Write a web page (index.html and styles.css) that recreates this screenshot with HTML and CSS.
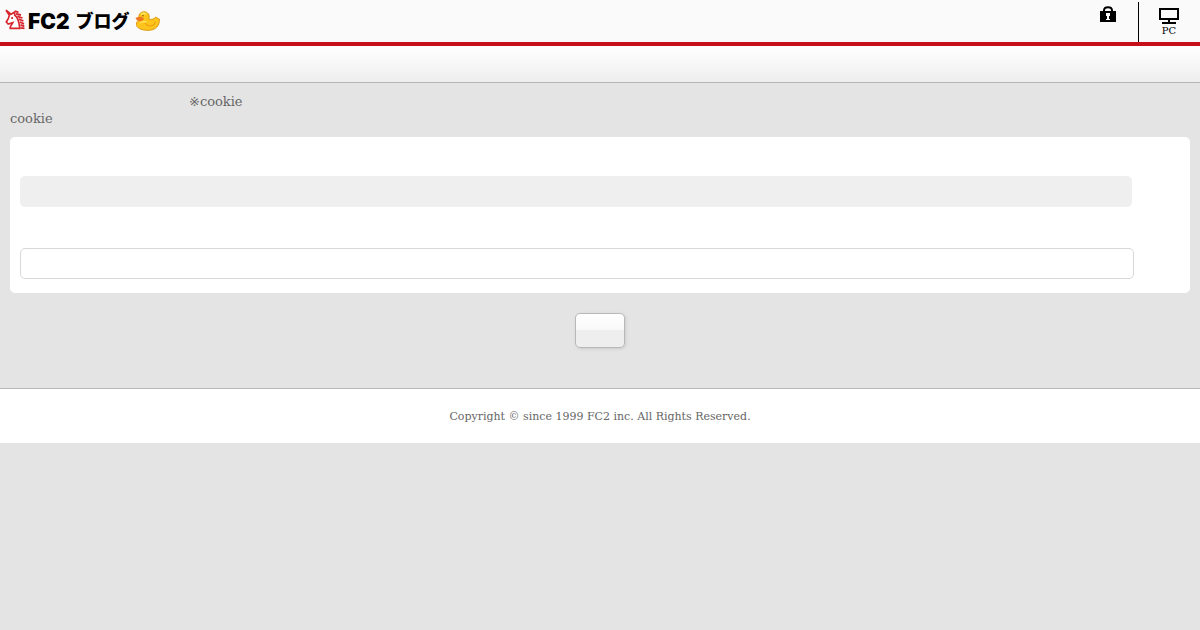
FILE: index.html
```
<!DOCTYPE html>
<html lang="ja">
<head>
<meta charset="utf-8">
<meta name="viewport" content="width=device-width, initial-scale=1">
<title>FC2 ブログ</title>
<link rel="stylesheet" href="styles.css">
</head>
<body>
<header class="header">
  <a class="logo" href="#">
    <svg class="logo-unicorn" viewBox="0 0 20 22" aria-hidden="true">
      <path class="horse" d="M1 1.2 6 5.2 9.5 3.2 9.8 6.3C12.5 8 14 12 14.8 19.3H5.2C4.8 17.8 6.3 16.3 7.8 13.6L3.2 15 1.3 13 3.4 9.5 4.4 6.2Z"/>
      <path class="mane" d="M9.8 2.2 13.5 3.4M11 4.8 16 6M12.4 7.4 17.5 9M13.8 10.2 18.4 12M14.8 13 19 14.8M15.5 15.8 19.3 17.4M15.5 18.8 19.5 19.4"/>
      <path class="mane" d="M6.2 9.2 8 9"/>
    </svg>
    <span class="logo-name">FC2</span>
    <span class="logo-blog">ブログ</span>
    <svg class="logo-duck" viewBox="0 0 25 20" aria-hidden="true">
      <path class="duck-body" d="M4.2 8.5C2.8 4 5.3.8 9 .8S15.3 4 13.8 8C16 9 18.8 8.2 20.6 6.2L24.4 8.2C24.8 14.8 20.5 19.3 13 19.3 6.2 19.3 1.4 17 1.4 13.2 1.4 11 2.7 9.8 4.2 8.5Z"/>
      <path class="duck-shine" d="M6 3.5Q8.5 1.4 11.4 3.2M5 12Q8 9.8 11.5 11"/>
      <path class="duck-wing" d="M10.2 12.2Q13 16.5 18 14.2 20 13 20.2 10.8"/>
      <path class="duck-beak" d="M.5 6.8Q3.5 5.8 6.2 5.8L9 7.4Q8 10.4 4.3 10.2 1.2 9.8.5 6.8Z"/>
      <circle class="duck-eye" cx="8" cy="4.8" r=".7"/>
    </svg>
  </a>
  <nav class="nav">
    <a class="nav-login" href="#" aria-label="ログイン">
      <svg class="icon-lock" viewBox="0 0 16 16" aria-hidden="true">
        <path class="shackle" d="M4 6V4.5C4 0 12 0 12 4.5V6"/>
        <path d="M0 5H16V16H0Z"/>
        <path class="keyhole" d="M6 7H10V10H9V13H10V14H6V13H7V10H6Z"/>
      </svg>
    </a>
    <a class="nav-pc" href="#">
      <svg class="icon-pc" viewBox="0 0 20 16" aria-hidden="true">
        <path d="M0 0H20V12H0ZM2 2V10H18V2ZM9 12H11V14H17V16H3V14H9Z" fill-rule="evenodd"/>
      </svg>
      <span>PC</span>
    </a>
  </nav>
</header>
<div class="title-bar"></div>
<form class="login">
  <p class="note">※cookie<br>cookie</p>
  <div class="card">
    <input class="field field-plain" type="password" aria-label="パスワード">
    <input class="field field-outlined" type="text" aria-label="認証">
  </div>
  <button class="submit" type="button" aria-label="送信"></button>
</form>
<footer class="footer">Copyright © since 1999 FC2 inc. All Rights Reserved.</footer>
</body>
</html>
```
FILE: styles.css
```
* {
  box-sizing: border-box;
}

body {
  margin: 0;
  background: #e4e4e4;
  color: #666;
  font-family: "DejaVu Serif", "DejaVu Sans", "Noto Sans CJK JP", serif;
  font-size: 13px;
  line-height: 17px;
}

.header {
  display: flex;
  justify-content: space-between;
  height: 46px;
  border-bottom: 4px solid #c7101a;
  background: #fafafa;
}

.logo {
  display: flex;
  align-items: center;
  padding: 0 0 2px 5px;
  color: #000;
  text-decoration: none;
}

.logo-unicorn {
  width: 20px;
  height: 22px;
  margin-right: 3px;
}

.horse {
  fill: #fff;
  stroke: #d7262e;
  stroke-width: 1.7;
}

.mane {
  fill: none;
  stroke: #d7262e;
  stroke-width: 1.8;
}

.logo-name {
  margin: 4px 6px 0 0;
  font: 900 21px/24px Inter, sans-serif;
}

.logo-blog {
  margin: 0 5px 0 0;
  font: 900 18px/24px "Noto Sans CJK JP", sans-serif;
}

.logo-duck {
  width: 25px;
  height: 20px;
  margin-top: 2px;
}

.duck-body {
  fill: #fdc51b;
  stroke: #dc9713;
  stroke-width: 1;
}

.duck-shine {
  fill: none;
  stroke: #ffe65c;
  stroke-width: 1.5;
}

.duck-wing {
  fill: none;
  stroke: #ee9d12;
  stroke-width: 1.2;
}

.duck-beak {
  fill: #ef7622;
}

.duck-eye {
  fill: #63420c;
}

.nav {
  display: flex;
  padding-top: 2px;
}

.nav-login,
.nav-pc {
  display: flex;
  flex-direction: column;
  align-items: center;
  color: #000;
  font-size: 10px;
  line-height: 14px;
  text-decoration: none;
}

.nav-login {
  width: 61px;
  padding-top: 4px;
}

.nav-pc {
  width: 62px;
  padding: 6px 1px 0 0;
  border-left: 1px solid #000;
}

.icon-lock {
  width: 16px;
  height: 16px;
}

.shackle {
  fill: none;
  stroke: #000;
  stroke-width: 2;
}

.keyhole {
  fill: #fff;
}

.icon-pc {
  width: 20px;
  height: 16px;
}

.title-bar {
  height: 37px;
  border-bottom: 1px solid #b4b4b4;
  background: linear-gradient(#fff, #eee);
}

.login {
  padding: 10px 10px 40px;
}

.note {
  margin: 0 0 10px;
  text-indent: 179px;
}

.card {
  display: flex;
  flex-direction: column;
  gap: 41px;
  padding: 39px 10px 14px;
  border-radius: 5px;
  background: #fff;
}

.field {
  width: 96%;
  height: 31px;
  padding: 5px;
  border: 1px solid #d8d8d8;
  border-radius: 5px;
  background: #fff;
  font: inherit;
}

.field-plain {
  width: calc(96% - 2px);
  border: 0;
  background: #efefef;
}

.submit {
  display: block;
  width: 50px;
  height: 35px;
  margin: 20px auto 0;
  border: 1px solid #b8b8b8;
  border-radius: 5px;
  background: linear-gradient(#fff, #f8f8f8 50%, #eee 50%, #eee);
  box-shadow: 1px 1px 3px #ccc;
}

.footer {
  padding: 19px 10px 18px;
  border-top: 1px solid #b8b8b8;
  background: #fff;
  font-size: 11px;
  text-align: center;
}
```
